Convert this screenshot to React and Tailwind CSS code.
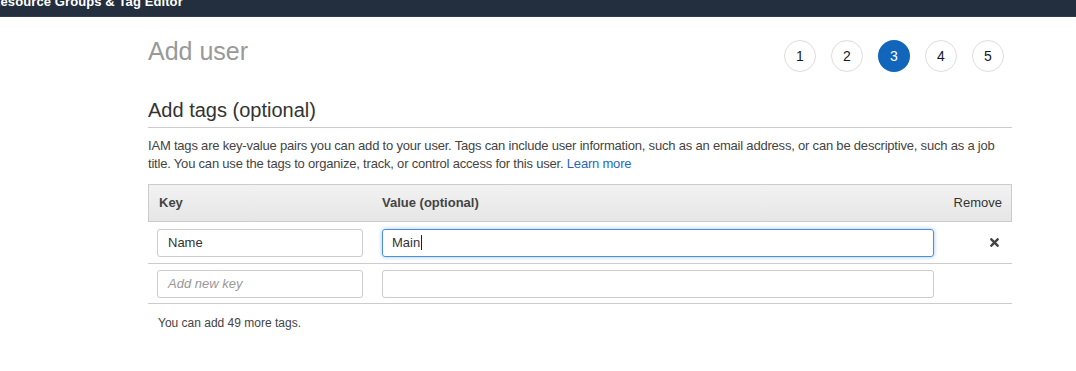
import { FaTimes } from "react-icons/fa";

const steps = [1, 2, 3, 4, 5];

function Step({ n, active }) {
  return (
    <div
      className={
        active
          ? "w-8 h-8 rounded-full bg-[#1166bb] text-white flex items-center justify-center text-[14px]"
          : "w-8 h-8 rounded-full border border-[#dddddd] bg-white text-[#16191f] flex items-center justify-center text-[14px]"
      }
    >
      {n}
    </div>
  );
}

export default function App() {
  return (
    <div className="min-h-screen bg-white font-['Liberation_Sans',Arial,sans-serif] text-[#444444]">
      {/* top nav, scrolled partly out of view */}
      <div className="h-[17px] bg-[#232f3e] overflow-hidden border-b border-[#2f3b4a]">
        <div className="-mt-[6px] -ml-[9px] text-white text-[13px] font-bold leading-[16px] tracking-[0.1px]">
          Resource Groups &amp; Tag Editor
        </div>
      </div>

      <div className="ml-[148px] w-[864px]">
        {/* title + steps */}
        <div className="flex items-start justify-between pt-[19px]">
          <h1 className="text-[25px] leading-[30px] text-[#999999]">Add user</h1>
          <div className="flex gap-[15px] mt-[4px] mr-[8px]">
            {steps.map((n) => (
              <Step key={n} n={n} active={n === 3} />
            ))}
          </div>
        </div>

        {/* section */}
        <h2 className="mt-[26px] text-[20px] leading-[24px] text-[#333333] pb-[5px] border-b border-[#cccccc]">
          Add tags (optional)
        </h2>

        <p className="mt-[9px] text-[13px] leading-[18px] tracking-[-0.2px] text-[#444444] whitespace-nowrap">
          IAM tags are key-value pairs you can add to your user. Tags can include user information, such as an email address, or can be descriptive, such as a job
          <br />
          title. You can use the tags to organize, track, or control access for this user.{" "}
          <a className="text-[#1e68c0]">Learn more</a>
        </p>

        {/* table */}
        <div className="mt-[11px]">
          <div className="flex items-center h-[38px] bg-gradient-to-b from-[#f2f2f2] to-[#e6e6e6] border border-[#cccccc] text-[13px] font-bold text-[#444444]">
            <div className="w-[224px] pl-[10px]">Key</div>
            <div className="flex-1 pl-[9px]">Value (optional)</div>
            <div className="w-[72px] pr-[9px] text-right font-normal text-[#333333] text-[13px]">Remove</div>
          </div>

          <div className="flex items-center h-[42px] border-b border-[#cccccc]">
            <div className="w-[225px] pl-[9px] pr-[10px]">
              <div className="h-[28px] border border-[#cccccc] rounded-[3px] flex items-center px-[10px] text-[13px] text-[#333333]">
                Name
              </div>
            </div>
            <div className="flex-1 pl-[9px]">
              <div className="h-[28px] border border-[#4a8fd8] rounded-[3px] shadow-[0_0_4px_rgba(82,150,230,0.55)] flex items-center px-[9px] text-[13px] text-[#333333]">
                Main<span className="inline-block w-[1px] h-[15px] bg-[#222222] ml-[1px]"></span>
              </div>
            </div>
            <div className="w-[78px] flex justify-end pr-[11px]">
              <FaTimes size={13} className="text-[#444444]" />
            </div>
          </div>

          <div className="flex items-center h-[40px] border-b border-[#cccccc]">
            <div className="w-[225px] pl-[9px] pr-[10px]">
              <div className="h-[28px] border border-[#cccccc] rounded-[3px] flex items-center px-[10px] text-[13px] italic text-[#999999]">
                Add new key
              </div>
            </div>
            <div className="flex-1 pl-[9px]">
              <div className="h-[28px] border border-[#cccccc] rounded-[3px]"></div>
            </div>
            <div className="w-[78px]"></div>
          </div>
        </div>

        <p className="mt-[11px] pl-[10px] text-[12px] leading-[16px] text-[#444444]">You can add 49 more tags.</p>
      </div>
    </div>
  );
}
